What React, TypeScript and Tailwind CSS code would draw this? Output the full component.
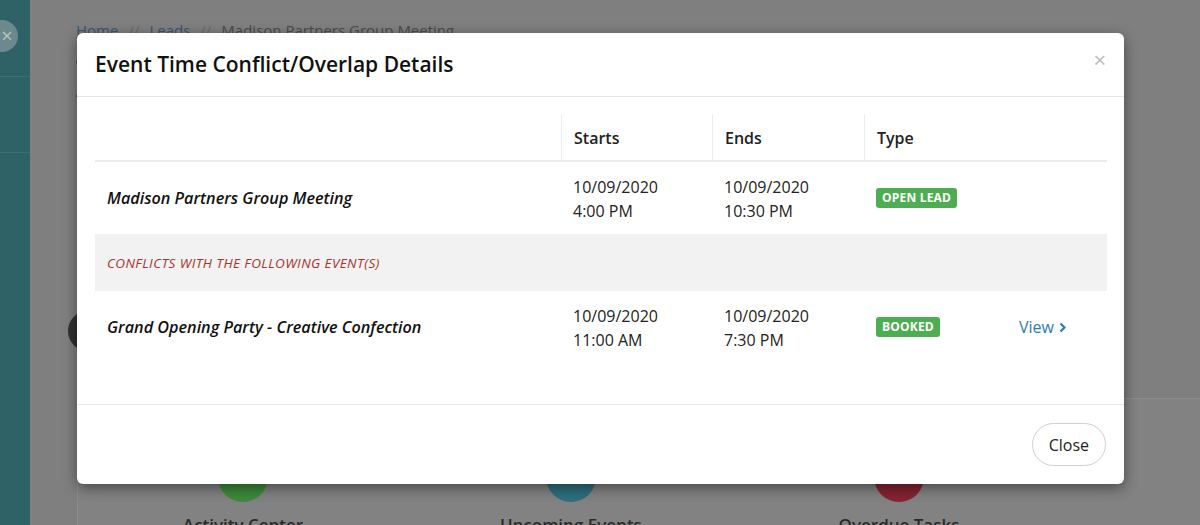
import React from "react";

function Badge({ label }: { label: string }) {
  return (
    <span className="inline-flex h-[20px] items-center rounded-[3px] bg-[#4cae50] px-[6px] text-[12px] font-bold uppercase leading-none tracking-[0.2px] text-white">
      {label}
    </span>
  );
}

function DateCell({ d, t }: { d: string; t: string }) {
  return (
    <div className="flex flex-col justify-center px-[12px] pt-[1px] text-[16px] leading-[24px] text-[#222]">
      <span>{d}</span>
      <span>{t}</span>
    </div>
  );
}

export default function App() {
  return (
    <div
      className="relative h-[525px] w-[1200px] overflow-hidden bg-[#7f7f7f]"
      style={{ fontFamily: "'Open Sans', 'Noto Sans', sans-serif" }}
    >
      {/* background page (dimmed) */}
      <div className="flex h-full">
        <div className="flex h-full w-[30px] shrink-0 flex-col bg-[#2e6266]">
          <div className="relative h-[77px] shrink-0 border-b border-[#3a6e72]">
            <div className="absolute left-[-14px] top-[20px] flex h-[32px] w-[32px] items-center justify-center rounded-full bg-[#6c8a8d] text-[20px] leading-none">
              <span className="ml-[10px] text-[#b7c4c5]">×</span>
            </div>
          </div>
          <div className="h-[76px] shrink-0 border-b border-[#3a6e72]" />
          <div className="flex-1" />
        </div>
        <div className="flex h-full flex-1 flex-col">
          <div className="flex h-[398px] shrink-0 flex-col pl-[46px] pt-[19px]">
            <div className="flex items-center gap-[10px] text-[15px] text-[#4a4a4a]">
              <span className="text-[#3b536b] underline">Home</span>
              <span className="text-[#6a6a6a]">//</span>
              <span className="text-[#3b536b] underline">Leads</span>
              <span className="text-[#6a6a6a]">//</span>
              <span>Madison Partners Group Meeting</span>
            </div>
            <div className="mt-[18px] flex flex-col gap-[30px]">
              <span className="h-[4px] w-[4px] rounded-full bg-[#3b4b5b]" />
              <span className="h-[4px] w-[4px] rounded-full bg-[#3b4b5b]" />
            </div>
            <div className="ml-[-8px] mt-[213px] h-[40px] w-[40px] rounded-full bg-[#303030]" />
          </div>
          <div className="ml-[47px] flex min-h-0 flex-1 overflow-hidden border-l border-t border-[#8c8c8c] bg-[#828282]">
            <div className="flex gap-[208px] pl-[105px] pt-[53px]">
              <div className="flex w-[120px] flex-col items-center">
                <div className="h-[50px] w-[50px] shrink-0 rounded-full bg-[#3d8a3a]" />
                <span className="mt-[10px] whitespace-nowrap text-[17px] font-semibold text-[#2a2a2a]">Activity Center</span>
              </div>
              <div className="flex w-[120px] flex-col items-center">
                <div className="h-[50px] w-[50px] shrink-0 rounded-full bg-[#2e6f7e]" />
                <span className="mt-[10px] whitespace-nowrap text-[17px] font-semibold text-[#2a2a2a]">Upcoming Events</span>
              </div>
              <div className="flex w-[120px] flex-col items-center">
                <div className="h-[50px] w-[50px] shrink-0 rounded-full bg-[#852432]" />
                <span className="mt-[10px] whitespace-nowrap text-[17px] font-semibold text-[#2a2a2a]">Overdue Tasks</span>
              </div>
            </div>
          </div>
        </div>
      </div>

      {/* modal */}
      <div className="absolute left-[77px] top-[33px] flex h-[451px] w-[1047px] flex-col rounded-[6px] bg-white shadow-[0_4px_14px_rgba(0,0,0,0.45)]">
        <div className="relative flex h-[64px] items-center border-b border-[#e6e6e6] px-[18px]">
          <h2 className="text-[21px] font-semibold text-[#111]">
            Event Time Conflict/Overlap Details
          </h2>
          <span className="absolute right-[18px] top-[15px] text-[22px] leading-none text-[#bbbbbb]">×</span>
        </div>

        <div className="flex-1 px-[18px] pt-[17px]">
          <div className="grid grid-cols-[466px_151px_152px_143px_100px]">
            {/* header */}
            <div className="h-[48px] border-b-2 border-[#ececec]" />
            <div className="flex h-[48px] items-center border-b-2 border-l border-[#ececec] px-[12px] pt-[2px] text-[16px] font-semibold text-[#222]">
              Starts
            </div>
            <div className="flex h-[48px] items-center border-b-2 border-l border-[#ececec] px-[12px] pt-[2px] text-[16px] font-semibold text-[#222]">
              Ends
            </div>
            <div className="flex h-[48px] items-center border-b-2 border-l border-[#ececec] px-[12px] pt-[2px] text-[16px] font-semibold text-[#222]">
              Type
            </div>
            <div className="h-[48px] border-b-2 border-[#ececec]" />

            {/* row 1 */}
            <div className="flex h-[72px] items-center px-[12px] pt-[1px] text-[16.2px] font-semibold italic text-[#111]">
              Madison Partners Group Meeting
            </div>
            <DateCell d="10/09/2020" t="4:00 PM" />
            <DateCell d="10/09/2020" t="10:30 PM" />
            <div className="flex items-center px-[12px]">
              <Badge label="Open Lead" />
            </div>
            <div />

            {/* conflict row */}
            <div className="col-span-5 flex h-[57px] items-center bg-[#f2f2f2] px-[12px] pt-[2px] text-[13.5px] font-medium italic tracking-[0.4px] text-[#a8352f]">
              CONFLICTS WITH THE FOLLOWING EVENT(S)
            </div>

            {/* row 2 */}
            <div className="flex h-[72px] items-center px-[12px] text-[16.2px] font-semibold italic text-[#111]">
              Grand Opening Party - Creative Confection
            </div>
            <DateCell d="10/09/2020" t="11:00 AM" />
            <DateCell d="10/09/2020" t="7:30 PM" />
            <div className="flex items-center px-[12px]">
              <Badge label="Booked" />
            </div>
            <div className="flex items-center px-[12px] text-[16px] text-[#2d7bb5]">
              View
              <svg className="ml-[5px] mt-[1px]" width="7" height="11" viewBox="0 0 7 11">
                <path d="M1.5 1.5 L5.5 5.5 L1.5 9.5" fill="none" stroke="#2d7bb5" strokeWidth="2.2" />
              </svg>
            </div>
          </div>
        </div>

        <div className="flex h-[80px] items-center justify-end border-t border-[#e6e6e6] px-[18px]">
          <button className="h-[43px] rounded-full border border-[#cfcfcf] bg-white px-[16px] text-[16px] text-[#222]">
            Close
          </button>
        </div>
      </div>
    </div>
  );
}
